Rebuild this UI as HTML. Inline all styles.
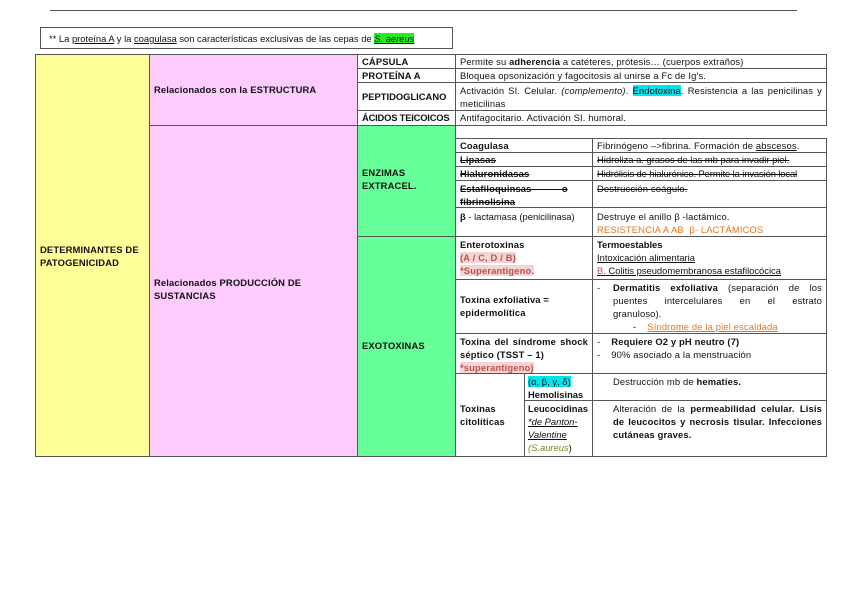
<!DOCTYPE html>
<html><head><meta charset="utf-8"><style>
body{margin:0;width:848px;height:599px;background:#fff;font-family:"Liberation Sans",sans-serif;font-size:9.4px;letter-spacing:.15px;color:#111;position:relative;overflow:hidden}
.a{position:absolute;box-sizing:border-box}
.c{position:absolute;box-sizing:border-box;border:1px solid #555;padding:1px 4px;line-height:13px;overflow:hidden}
b{font-weight:bold}
.s{text-decoration:line-through}
.u{text-decoration:underline}
.or{color:#e8751a}
.rd{color:#c0504d;background:#f4d5d5}
.j{text-align:justify}
.jl{text-align:justify;text-align-last:justify}
</style></head><body>
<div class="a" style="left:50px;top:10px;width:747px;height:1px;background:#555"></div>
<div class="c" style="left:40px;top:27px;width:413px;height:22px;padding:4px 8px;letter-spacing:0">** La <span class="u">proteína A</span> y la <span class="u">coagulasa</span> son características exclusivas de las cepas de <i class="u" style="background:#22ee22">S. aereus</i></div>

<div class="c" style="left:35px;top:54px;width:115px;height:403px;background:#ffff99;padding-top:188px;padding-right:10px"><b>DETERMINANTES DE PATOGENICIDAD</b></div>
<div class="c" style="left:149px;top:54px;width:209px;height:72px;background:#ffccff;padding-top:28px"><b>Relacionados con la ESTRUCTURA</b></div>
<div class="c" style="left:149px;top:125px;width:209px;height:332px;background:#ffccff;padding-top:150px;padding-right:50px"><b>Relacionados PRODUCCIÓN DE SUSTANCIAS</b></div>

<div class="c" style="left:357px;top:54px;width:99px;height:15px;line-height:12px"><b>CÁPSULA</b></div>
<div class="c" style="left:455px;top:54px;width:372px;height:15px;line-height:12px">Permite su <b>adherencia</b> a catéteres, prótesis… (cuerpos extraños)</div>
<div class="c" style="left:357px;top:68px;width:99px;height:15px;line-height:12px"><b>PROTEÍNA A</b></div>
<div class="c" style="left:455px;top:68px;width:372px;height:15px;line-height:12px">Bloquea opsonización y fagocitosis al unirse a Fc de Ig's.</div>
<div class="c" style="left:357px;top:82px;width:99px;height:29px;padding-top:7px;letter-spacing:0"><b>PEPTIDOGLICANO</b></div>
<div class="c j" style="left:455px;top:82px;width:372px;height:29px;line-height:13px">Activación SI. Celular. <i>(complemento)</i>. <span style="background:#00e5ee">Endotoxina</span>. Resistencia a las penicilinas y meticilinas</div>
<div class="c" style="left:357px;top:110px;width:99px;height:16px;line-height:12px;letter-spacing:-.2px"><b>ÁCIDOS TEICOICOS</b></div>
<div class="c" style="left:455px;top:110px;width:372px;height:16px;line-height:12px">Antifagocitario. Activación SI. humoral.</div>

<div class="c" style="left:357px;top:125px;width:99px;height:112px;background:#66ff99;padding-top:40px"><b>ENZIMAS EXTRACEL.</b></div>
<div class="c" style="left:357px;top:236px;width:99px;height:221px;background:#66ff99;padding-top:102px"><b>EXOTOXINAS</b></div>

<div class="c" style="left:455px;top:138px;width:138px;height:15px;line-height:12px"><b>Coagulasa</b></div>
<div class="c" style="left:592px;top:138px;width:235px;height:15px;line-height:12px">Fibrinógeno –&gt;fibrina. Formación de <span class="u">abscesos</span>.</div>
<div class="c" style="left:455px;top:152px;width:138px;height:15px;line-height:12px"><b class="s">Lipasas</b></div>
<div class="c s" style="left:592px;top:152px;width:235px;height:15px;line-height:12px;letter-spacing:0">Hidroliza a. grasos de las mb para invadir piel.</div>
<div class="c" style="left:455px;top:166px;width:138px;height:15px;line-height:12px"><b class="s">Hialuronidasas</b></div>
<div class="c s" style="left:592px;top:166px;width:235px;height:15px;line-height:12px;letter-spacing:-.1px;white-space:nowrap">Hidrólisis de hialurónico. Permite la invasión local</div>
<div class="c" style="left:455px;top:180px;width:138px;height:28px"><b class="s">Estafiloquinsas &nbsp; &nbsp; &nbsp; &nbsp; &nbsp; o fibrinolisina</b></div>
<div class="c s" style="left:592px;top:180px;width:235px;height:28px">Destrucción coágulo.</div>
<div class="c" style="left:455px;top:207px;width:138px;height:30px;padding-top:2px;letter-spacing:0"><b>β</b> - lactamasa (penicilinasa)</div>
<div class="c" style="left:592px;top:207px;width:235px;height:30px;padding-top:2px">Destruye el anillo β -lactámico.<br><span class="or">RESISTENCIA A AB &nbsp;β- LACTÁMICOS</span></div>

<div class="c" style="left:455px;top:236px;width:138px;height:44px"><b>Enterotoxinas</b><br><b class="rd">(A / C, D / B)</b><br><b class="rd">*Superantigeno.</b></div>
<div class="c" style="left:592px;top:236px;width:235px;height:44px;letter-spacing:0"><b>Termoestables</b><br><span class="u">Intoxicación alimentaria</span><br><span class="u"><span style="color:#c0504d">B.</span> Colitis pseudomembranosa estafilocócica</span></div>
<div class="c" style="left:455px;top:279px;width:138px;height:55px;padding-top:13px"><b>Toxina exfoliativa = epidermolítica</b></div>
<div class="c" style="left:592px;top:279px;width:235px;height:55px;padding-left:20px">
<span style="position:absolute;left:4px;top:1px">-</span>
<div class="jl"><b>Dermatitis exfoliativa</b> (separación de los</div>
<div class="jl">puentes intercelulares en el estrato</div>
<div>granuloso).</div>
<div style="padding-left:20px">- &nbsp;&nbsp;&nbsp;<span class="or u">Síndrome de la piel escaldada</span></div></div>
<div class="c j" style="left:455px;top:333px;width:138px;height:41px"><b>Toxina del síndrome shock séptico (TSST – 1)</b><br><b class="rd">*superantígeno)</b></div>
<div class="c" style="left:592px;top:333px;width:235px;height:41px">-&nbsp;&nbsp;&nbsp;&nbsp;<b>Requiere O2 y pH neutro (7)</b><br>-&nbsp;&nbsp;&nbsp;&nbsp;90% asociado a la menstruación</div>
<div class="c" style="left:455px;top:373px;width:70px;height:84px;padding-top:28px"><b>Toxinas citolíticas</b></div>
<div class="c" style="left:524px;top:373px;width:69px;height:28px;padding-left:3px;letter-spacing:0"><span style="background:#00e5ee">(α, β, γ, δ)</span><br><b>Hemolisinas</b></div>
<div class="c" style="left:592px;top:373px;width:235px;height:28px;padding-left:20px">Destrucción mb de <b>hematíes.</b></div>
<div class="c" style="left:524px;top:400px;width:69px;height:57px;padding-left:3px;letter-spacing:0"><b>Leucocidinas</b><br><i class="u">*de Panton-Valentine</i><br><i style="color:#6b8e23">(S.aureus</i>)</div>
<div class="c j" style="left:592px;top:400px;width:235px;height:57px;padding-left:20px">Alteración de la <b>permeabilidad celular. Lisis de leucocitos y necrosis tisular. Infecciones cutáneas graves.</b></div>
</body></html>
